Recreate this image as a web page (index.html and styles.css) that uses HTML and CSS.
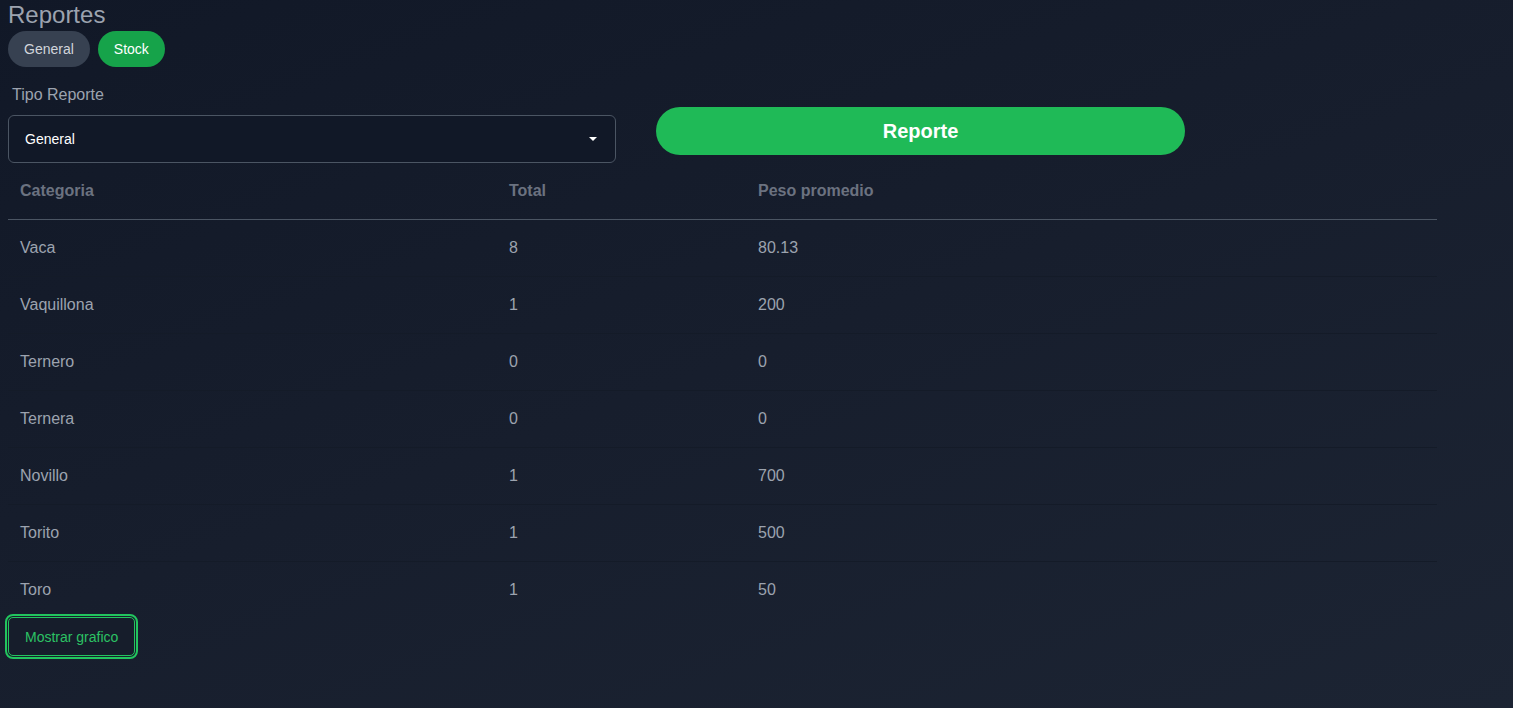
FILE: index.html
```html
<!DOCTYPE html>
<html lang="es">
<head>
<meta charset="utf-8">
<title>Reportes</title>
<link rel="stylesheet" href="styles.css">
</head>
<body>
<main class="page">
  <h1 class="title">Reportes</h1>
  <nav class="tabs">
    <button class="tab">General</button>
    <button class="tab tab-active">Stock</button>
  </nav>
  <section class="controls">
    <div class="field">
      <label class="field-label">Tipo Reporte</label>
      <div class="select">
        <span>General</span>
        <svg class="caret" width="8" height="4" viewBox="0 0 8 4"><path d="M0 0h8L4 4z" fill="#ffffff"/></svg>
      </div>
    </div>
    <button class="report-btn">Reporte</button>
  </section>
  <table class="table">
    <thead>
      <tr><th class="c1">Categoria</th><th class="c2">Total</th><th>Peso promedio</th></tr>
    </thead>
    <tbody>
      <tr><td>Vaca</td><td>8</td><td>80.13</td></tr>
      <tr><td>Vaquillona</td><td>1</td><td>200</td></tr>
      <tr><td>Ternero</td><td>0</td><td>0</td></tr>
      <tr><td>Ternera</td><td>0</td><td>0</td></tr>
      <tr><td>Novillo</td><td>1</td><td>700</td></tr>
      <tr><td>Torito</td><td>1</td><td>500</td></tr>
      <tr><td>Toro</td><td>1</td><td>50</td></tr>
    </tbody>
  </table>
  <button class="chart-btn">Mostrar grafico</button>
</main>
</body>
</html>
```
FILE: styles.css
```css
html, body {
  margin: 0;
  height: 100%;
}
body {
  background: linear-gradient(160deg, #111827 0%, #171e2d 50%, #1c2433 100%);
  font-family: "Liberation Sans", Arial, sans-serif;
  color: #9ca3af;
  min-height: 708px;
}
.page {
  padding: 0 8px;
}
.title {
  margin: 0;
  font-size: 24px;
  font-weight: 400;
  line-height: 30px;
  color: #9ca3af;
}
.tabs {
  display: flex;
  gap: 8px;
  margin-top: 1px;
}
.tab {
  height: 36px;
  padding: 0 16px;
  border: none;
  border-radius: 18px;
  background: #374151;
  color: #d1d5db;
  font-family: "Liberation Sans", Arial, sans-serif;
  font-size: 14px;
}
.tab-active {
  background: #16a34a;
  color: #ffffff;
}
.controls {
  display: flex;
  align-items: flex-end;
  gap: 40px;
  margin-top: 16px;
}
.field {
  display: flex;
  flex-direction: column;
  width: 608px;
}
.field-label {
  font-size: 16px;
  line-height: 24px;
  padding-left: 4px;
  margin-bottom: 8px;
  color: #9ca3af;
}
.select {
  box-sizing: border-box;
  height: 48px;
  border: 1px solid #4b5563;
  border-radius: 6px;
  background: #111827;
  display: flex;
  align-items: center;
  justify-content: space-between;
  padding: 0 18px 0 16px;
  color: #ffffff;
  font-size: 14px;
}
.caret {
  display: block;
}
.report-btn {
  width: 529px;
  height: 48px;
  margin-bottom: 8px;
  border: none;
  border-radius: 24px;
  background: #1fba57;
  color: #ffffff;
  font-family: "Liberation Sans", Arial, sans-serif;
  font-size: 20px;
  font-weight: 700;
}
.table {
  width: 1429px;
  border-collapse: collapse;
  font-size: 16px;
}
.table th {
  text-align: left;
  font-weight: 700;
  color: #6b7280;
  padding: 16px 12px;
  line-height: 24px;
  border-bottom: 1px solid #4b5563;
}
.table th.c1 { width: 465px; }
.table th.c2 { width: 225px; }
.table td {
  padding: 16px 12px;
  line-height: 24px;
  color: #9ca3af;
  border-bottom: 1px solid #141b28;
}
.table tbody tr:last-child td {
  border-bottom: none;
}
.chart-btn {
  margin-top: -1px;
  height: 39px;
  padding: 0 16px;
  background: #161d2b;
  border: 1px solid #22c55e;
  border-radius: 5px;
  outline: 2px solid #22c55e;
  outline-offset: 1px;
  color: #2cc264;
  font-family: "Liberation Sans", Arial, sans-serif;
  font-size: 14px;
}
```
